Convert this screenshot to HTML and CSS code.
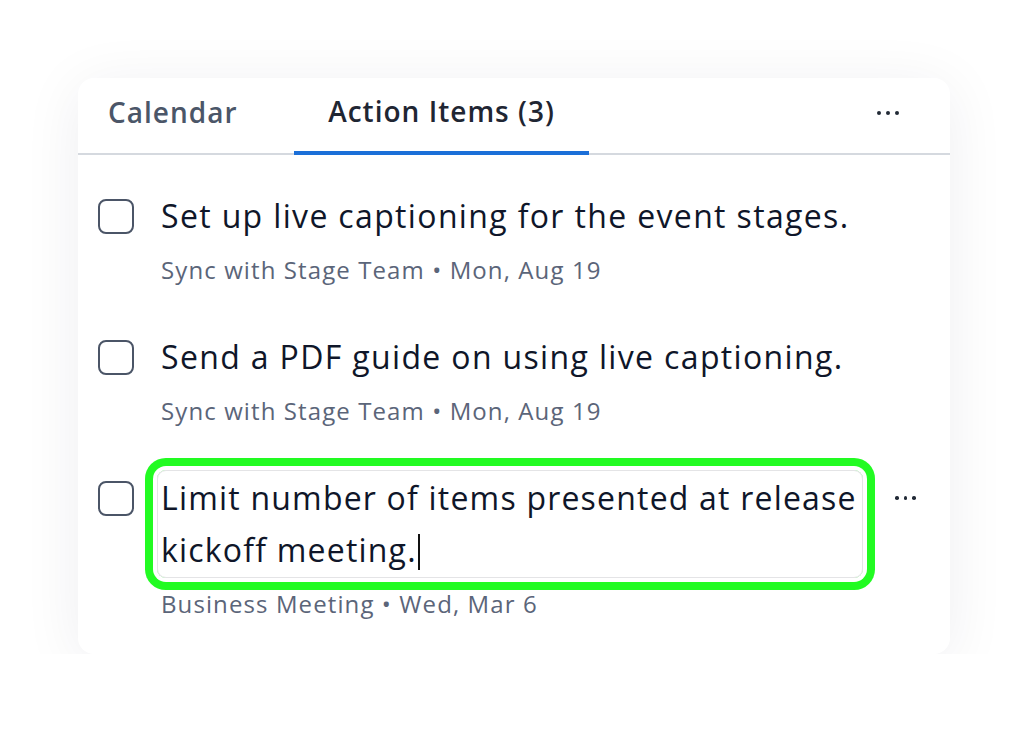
FILE: index.html
```html
<!DOCTYPE html>
<html lang="en">
<head>
<meta charset="utf-8">
<title>Action Items</title>
<link rel="stylesheet" href="styles.css">
</head>
<body>
<div class="card">
  <div class="tabs">
    <div class="tab tab-calendar">Calendar</div>
    <div class="tab tab-active">Action Items (3)</div>
    <div class="tabs-spacer"></div>
    <div class="more more-header"><span></span><span></span><span></span></div>
  </div>
  <ul class="list">
    <li class="item">
      <span class="check"></span>
      <div class="body">
        <div class="title">Set up live captioning for the event stages.</div>
        <div class="meta">Sync with Stage Team • Mon, Aug 19</div>
      </div>
    </li>
    <li class="item">
      <span class="check"></span>
      <div class="body">
        <div class="title">Send a PDF guide on using live captioning.</div>
        <div class="meta">Sync with Stage Team • Mon, Aug 19</div>
      </div>
    </li>
    <li class="item">
      <span class="check"></span>
      <div class="body">
        <div class="title editing">Limit number of items presented at release kickoff meeting.<span class="caret"></span></div>
        <div class="meta">Business Meeting • Wed, Mar 6</div>
      </div>
      <div class="more more-item"><span></span><span></span><span></span></div>
    </li>
  </ul>
</div>
</body>
</html>
```

FILE: styles.css
```css
html, body {
  margin: 0;
  padding: 0;
  background: #ffffff;
}
body {
  padding: 78px 0 0 78px;
  font-family: "Open Sans", "Noto Sans", sans-serif;
}
.card {
  width: 872px;
  height: 576px;
  background: #ffffff;
  border-radius: 16px;
  box-shadow: 0 8px 60px rgba(20, 30, 50, 0.07);
  box-sizing: border-box;
}
.tabs {
  display: flex;
  align-items: stretch;
  height: 77px;
  border-bottom: 2px solid #d5d9df;
  box-sizing: border-box;
}
.tab {
  display: flex;
  align-items: center;
  font-size: 28px;
  font-weight: 600;
  letter-spacing: 1px;
  padding-bottom: 7px;
  box-sizing: border-box;
}
.tab-calendar {
  color: #4b5668;
  padding-left: 30px;
  width: 216px;
}
.tab-active {
  color: #1f2633;
  width: 295px;
  justify-content: center;
  border-bottom: 4px solid #1b6fd8;
  margin-bottom: -2px;
}
.tabs-spacer {
  flex: 1;
}
.more {
  display: flex;
  align-items: center;
  gap: 5px;
}
.more span {
  display: block;
  width: 4px;
  height: 4px;
  border-radius: 50%;
  background: #222a36;
}
.more-header {
  margin-right: 51px;
  padding-bottom: 6px;
}
.list {
  list-style: none;
  margin: 0;
  padding: 35px 0 0 20px;
  display: flex;
  flex-direction: column;
  gap: 45px;
}
.item {
  display: flex;
  align-items: flex-start;
}
.check {
  flex: none;
  width: 36px;
  height: 35px;
  box-sizing: border-box;
  border: 2.5px solid #4b5567;
  border-radius: 8px;
  margin-top: 9px;
  margin-right: 27px;
}
.body {
  width: 702px;
}
.title {
  font-size: 32px;
  line-height: 52px;
  letter-spacing: 1.35px;
  color: #0f1629;
}
.meta {
  margin-top: 12px;
  font-size: 24px;
  line-height: 32px;
  letter-spacing: 1.1px;
  color: #5b6579;
}
.editing {
  margin-left: -4px;
  margin-top: -2px;
  margin-bottom: -2px;
  padding: 1px 0 1px 3px;
  letter-spacing: 1.2px;
  border: 1px solid #e4e4e6;
  border-radius: 9px;
  box-shadow: 0 0 0 4px #ffffff, 0 0 0 12px #22fb22;
}
.caret {
  display: inline-block;
  width: 2px;
  height: 36px;
  background: #111;
  vertical-align: -8px;
  margin-left: 1px;
}
.more-item {
  margin-left: 32px;
  height: 52px;
  gap: 5px;
}
.more-item span {
  width: 3.5px;
  height: 3.5px;
}
```
